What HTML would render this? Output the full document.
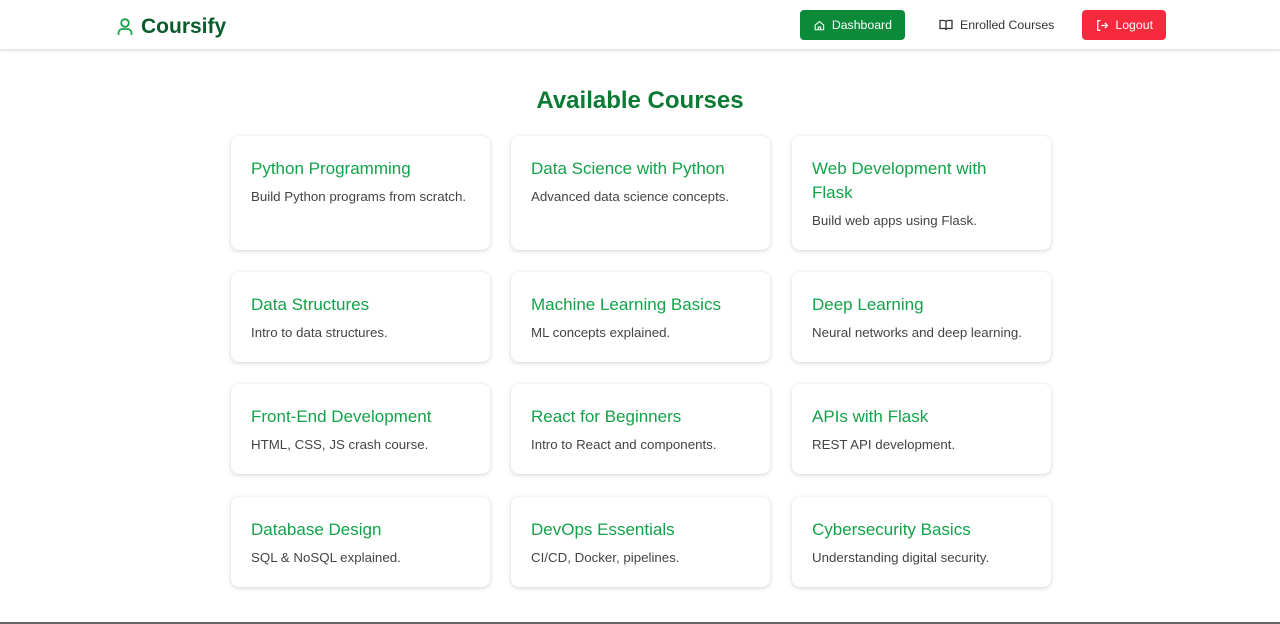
<!DOCTYPE html>
<html><head><style>
*{box-sizing:border-box;margin:0;padding:0}
body{width:1280px;height:624px;overflow:hidden;background:#fff;font-family:"Liberation Sans",sans-serif;position:relative}
.hdr{height:51px;border-bottom:2px solid #e8e8e8;position:relative;box-shadow:0 1px 3px rgba(0,0,0,.05)}
.logo{position:absolute;left:117px;top:15px;font-weight:bold;font-size:21px;color:#0b5b2c;display:flex;align-items:center;gap:8px}
.btn{position:absolute;top:10px;height:30px;border-radius:4px;font-size:12.3px;display:flex;align-items:center;gap:7px;padding:0 13px}
.dash{left:800px;width:105px;background:#0b8a3a;color:#fff;padding-left:14px}
.enr{left:926px;color:#333}
.out{left:1082px;width:84px;background:#f62a3c;color:#fff;padding-left:14px}
h1{position:absolute;top:87px;width:100%;text-align:center;font-size:24px;color:#0b7a34;font-weight:bold}
.card{position:absolute;width:259px;border-radius:8px;background:#fff;box-shadow:0 1px 5px rgba(0,0,0,.18);padding:21px 20px}
.card h3{font-size:17px;font-weight:normal;color:#13a24a;line-height:24px;margin-bottom:7px}
.card p{font-size:13.3px;color:#444;line-height:18px}
.bl{position:absolute;left:0;bottom:0;width:100%;height:2px;background:#666}
</style></head><body>
<div class="hdr">
<div class="logo"><svg width="16" height="18" viewBox="0 0 16 18" fill="none" stroke="#17a34a" stroke-width="1.8"><circle cx="8" cy="5" r="3.8"/><path d="M1.5 17v-2a4 4 0 0 1 4-4h5a4 4 0 0 1 4 4v2"/></svg>Coursify</div>
<div class="btn dash"><svg width="13" height="13" viewBox="0 0 14 14" fill="none" stroke="#fff" stroke-width="1.4"><path d="M1.5 6.5L7 2l5.5 4.5V12.5h-11z"/><path d="M5.5 12.5V9h3v3.5"/></svg>Dashboard</div>
<div class="btn enr"><svg width="14" height="12" viewBox="0 0 14 12" fill="none" stroke="#333" stroke-width="1.3"><path d="M1 1.5h4a2 2 0 0 1 2 2V11a1.5 1.5 0 0 0-1.5-1.5H1zM13 1.5H9a2 2 0 0 0-2 2V11a1.5 1.5 0 0 1 1.5-1.5H13z"/></svg>Enrolled Courses</div>
<div class="btn out"><svg width="13" height="13" viewBox="0 0 14 14" fill="none" stroke="#fff" stroke-width="1.4"><path d="M5 1.5H2v11h3M6 7h7M10 4l3 3-3 3"/></svg>Logout</div>
</div>
<h1>Available Courses</h1>
<div class="card" style="left:231px;top:136px;height:114px"><h3>Python Programming</h3><p>Build Python programs from scratch.</p></div>
<div class="card" style="left:511px;top:136px;height:114px"><h3>Data Science with Python</h3><p>Advanced data science concepts.</p></div>
<div class="card" style="left:792px;top:136px;height:114px"><h3>Web Development with Flask</h3><p>Build web apps using Flask.</p></div>
<div class="card" style="left:231px;top:272px;height:90px"><h3>Data Structures</h3><p>Intro to data structures.</p></div>
<div class="card" style="left:511px;top:272px;height:90px"><h3>Machine Learning Basics</h3><p>ML concepts explained.</p></div>
<div class="card" style="left:792px;top:272px;height:90px"><h3>Deep Learning</h3><p>Neural networks and deep learning.</p></div>
<div class="card" style="left:231px;top:384px;height:90px"><h3>Front-End Development</h3><p>HTML, CSS, JS crash course.</p></div>
<div class="card" style="left:511px;top:384px;height:90px"><h3>React for Beginners</h3><p>Intro to React and components.</p></div>
<div class="card" style="left:792px;top:384px;height:90px"><h3>APIs with Flask</h3><p>REST API development.</p></div>
<div class="card" style="left:231px;top:497px;height:90px"><h3>Database Design</h3><p>SQL &amp; NoSQL explained.</p></div>
<div class="card" style="left:511px;top:497px;height:90px"><h3>DevOps Essentials</h3><p>CI/CD, Docker, pipelines.</p></div>
<div class="card" style="left:792px;top:497px;height:90px"><h3>Cybersecurity Basics</h3><p>Understanding digital security.</p></div>
<div class="bl"></div>
</body></html>
